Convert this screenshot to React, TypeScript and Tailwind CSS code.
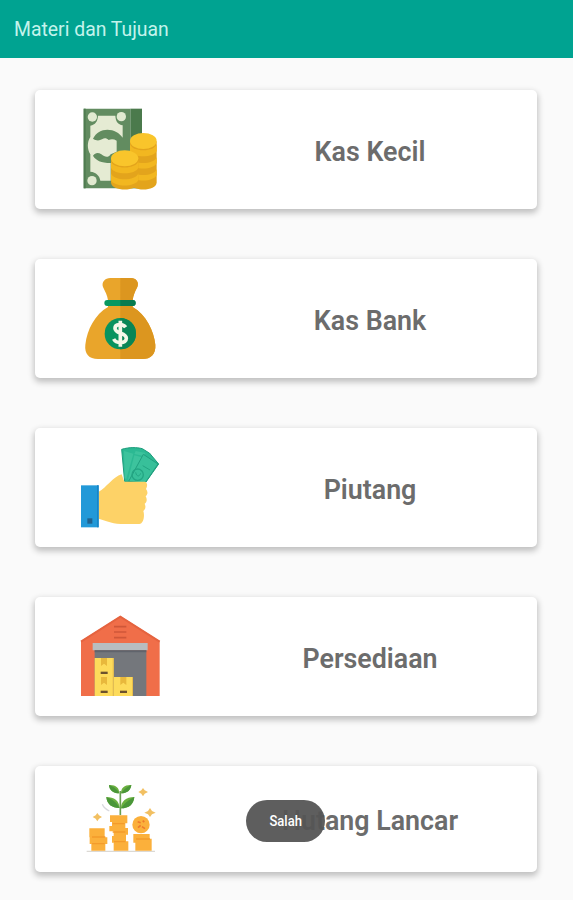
import type { ReactNode } from "react";

function CashIcon() {
  return (
    <svg width="100" height="105" viewBox="0 0 300 315">
      <path fill="#628c60" d="M41 41h140v239H41z" />
      <path fill="#4b7a4c" d="M181 41h35v239h-35z" />
      <path fill="#4f7c50" d="M41 41h6v239h-6z" />
      <path fill="#e5ebd3" d="M84 62h52c1 18 8 26 22 29v37c-10-15-26-24-46-24-18 0-34 9-43 27 8 6 18 7 27 2 8-5 14-3 20 2 7-3 16-3 24 2v33l-18 8c-8 12-18 8-28 0-9-6-18-6-25 4 8 14 24 22 53 22v53H91c-2-15-12-25-30-27v-52c-10-17-10-37 0-52V92c15-3 22-13 23-30z" />
      <circle cx="67" cy="66" r="14" fill="#e1ead0" />
      <circle cx="154" cy="65" r="14" fill="#e1ead0" />
      <circle cx="66" cy="257" r="14" fill="#e1ead0" />
      <path fill="#e3a41c" d="M180 139h80v123c0 29-80 29-80 0z" />
      <path fill="#f2b720" d="M180 146c4 26 76 26 80 0v22c-8 21-72 21-80 0zM180 186c8 24 72 24 80 0v18c-8 22-72 22-80 0zM180 222c8 24 72 24 80 0v18c-8 22-72 22-80 0z" />
      <ellipse cx="220" cy="138" rx="40" ry="24" fill="#f9c52b" />
      <path fill="#e3a41c" d="M123 190h82v72c0 29-82 29-82 0z" />
      <path fill="#f2b720" d="M123 198c4 26 78 26 82 0v20c-8 22-74 22-82 0zM123 235c8 24 74 24 82 0v20c-8 22-74 22-82 0z" />
      <ellipse cx="164" cy="190" rx="41" ry="24" fill="#f9c52b" />
    </svg>
  );
}

function MoneyBagIcon() {
  return (
    <svg width="100" height="105" viewBox="0 -3 300 315">
      <path fill="#e9a52b" d="M121 39h62c15 0 25 13 19 27-8 16-12 24-14 40v20c41 22 64 74 68 113 2 28-14 43-38 43H84c-27 0-41-16-38-43 5-45 29-91 68-113v-20c-2-16-8-25-15-40-5-14 6-27 22-27z" />
      <path fill="#dc961f" d="M151 39h32c15 0 25 13 19 27-8 16-12 24-14 40v20c41 22 64 74 68 113 2 28-14 43-38 43h-67z" />
      <rect x="103" y="105" width="94" height="18" rx="9" fill="#079861" />
      <path fill="#087b50" d="M151 105h37a9 9 0 0 1 0 18h-37z" />
      <circle cx="151" cy="206" r="47" fill="#08935e" />
      <path fill="#088555" d="M151 159a47 47 0 0 1 0 94z" />
      <path d="M151 167v78M167 187c-8-12-32-11-32 3 0 18 34 12 34 30 0 17-30 17-38 2" fill="none" stroke="#f4f7e8" strokeWidth="11" />
    </svg>
  );
}

function HandCashIcon() {
  return (
    <svg width="100" height="105" viewBox="0 -6 300 315">
      <path fill="#2cb993" stroke="#1c9c7b" strokeWidth="3" d="M155 43c24-7 45-6 62-2l22 14 27 32-41 58-61-5z" />
      <path fill="#3dc39d" d="M162 48l28 8-21 76-5-2zM197 48l30 6-9 8-25-5zM193 61l31 8-36 60-14 5z" />
      <path fill="#38c09a" stroke="#219f7f" strokeWidth="3" d="M220 58l44 29-39 57-49-5z" />
      <circle cx="203" cy="119" r="17" fill="none" stroke="#23a583" strokeWidth="4" />
      <path d="M197 112c3 14 11 14 15 3M218 92l22 13" fill="none" stroke="#23a583" strokeWidth="3" />
      <path fill="#fdd267" d="M86 170c23-11 43-45 69-52l8 22h61c9 1 9 14 4 22 6 9 6 15-1 22 5 8 4 17-3 22 4 9 3 16-4 22 5 15 0 39-12 39h-56c-31-2-46-11-66-16z" />
      <path fill="#2299d8" d="M33 151h53v126H33z" />
      <path fill="#1685c7" d="M81 151h5v126h-5z" />
      <path fill="#21628e" d="M52 250h15v16H52z" />
    </svg>
  );
}

function Box({ x, y }: { x: number; y: number }) {
  return (
    <g transform={`translate(${x} ${y})`}>
      <path fill="#fddb5b" d="M0 0h57v57H0z" />
      <path fill="#e8b83c" d="M19 0h18v24l-9-7-9 7z" />
      <path fill="#6c512d" d="M18 41h21v7H18z" />
      <path fill="#e9be4c" d="M54 0h3v57h-3z" />
    </g>
  );
}

function WarehouseIcon() {
  return (
    <svg width="100" height="105" viewBox="0 -9 300 315">
      <path fill="#f06e49" d="M33 108L151 33l118 75v165H33z" />
      <path d="M33 110L151 35l118 75" fill="none" stroke="#e5633f" strokeWidth="6" />
      <path d="M132 65h37M132 81h37M132 98h37" stroke="#cf5739" strokeWidth="5" />
      <path fill="#b8bdc0" d="M68 114h165v22H68z" />
      <path fill="#74777c" d="M74 136h155v137H74z" />
      <path fill="#60646c" d="M74 136h155v6H74z" />
      <Box x={74} y={159} />
      <Box x={74} y={216} />
      <Box x={132} y={216} />
    </svg>
  );
}

function InvestmentIcon() {
  return (
    <svg width="100" height="105" viewBox="0 3 300 315">
      <path d="M50 244h205" stroke="#dcd9d4" strokeWidth="4" />
      <path fill="#fbb03b" d="M58 175h46v27h8v20h-6v20H64v-20h-5v-20h-1zM126 136h46v24h-6v14h8v20h-6v20h7v28h-44v-24h-5v-20h5v-14h-13v-16h8v-12h-6v-20h6zM190 192h49v14h6v36h-49v-24h-6z" />
      <path d="M66 201h40M66 221h38M128 161h36M128 186h38M132 215h34M198 207h42" stroke="#f49b2b" strokeWidth="4" />
      <circle cx="213" cy="164" r="26" fill="#fbb03b" />
      <path d="M203 155l9 3M216 170l9 6M204 173l8-7M218 152l5 4" stroke="#ee7a2b" strokeWidth="5" />
      <path d="M151 135V63" stroke="#689f50" strokeWidth="5" />
      <path fill="#6bb03f" d="M148 70c-19 0-30-10-31-25 20-1 31 8 31 25zM153 70c0-17 11-26 31-25-2 16-13 25-31 25zM149 114c-24 0-38-12-40-33 23 0 39 11 40 33zM153 115c0-21 15-34 40-34-2 22-16 34-40 34z" />
      <path fill="#4a9639" d="M117 45c15 6 23 11 31 25-19 0-30-10-31-25zM184 45c-15 7-22 13-31 25 18 0 29-9 31-25zM109 81c19 8 30 15 40 33-24 0-38-12-40-33zM193 81c-17 9-26 15-40 34 24 0 38-12 40-34z" />
      <path fill="#f2c062" d="M219 54l5 7 10 5-10 5-5 8-5-8-9-5 9-5zM240 114l6 9 11 5-11 5-6 8-6-8-11-5 11-5zM82 129l5 7 9 5-9 5-5 8-5-8-9-5 9-5z" />
      <path d="M97 103c4 10 10 15 21 20" fill="none" stroke="#d7d7dd" strokeWidth="4" />
    </svg>
  );
}

const menu: { title: string; icon: ReactNode; height: string }[] = [
  { title: "Kas Kecil", icon: <CashIcon />, height: "h-[119px]" },
  { title: "Kas Bank", icon: <MoneyBagIcon />, height: "h-[119px]" },
  { title: "Piutang", icon: <HandCashIcon />, height: "h-[119px]" },
  { title: "Persediaan", icon: <WarehouseIcon />, height: "h-[119px]" },
  { title: "Hutang Lancar", icon: <InvestmentIcon />, height: "h-[106px]" },
];

export default function App() {
  return (
    <div className="relative h-[900px] w-[573px] overflow-hidden bg-[#fafafa] font-[Roboto,sans-serif]">
      <header className="flex h-[58px] items-center bg-[#00a391] pt-[2px] pl-[14px] text-[19.4px] text-[#c4f3ec]">
        <h1>Materi dan Tujuan</h1>
      </header>
      <main className="flex flex-col gap-[50px] pt-8 pr-9 pl-[35px]">
        {menu.map(item => (
          <section key={item.title} className={`flex shrink-0 rounded-[5px] bg-white shadow-[0_3px_6px_1px_rgba(0,0,0,0.24)] ${item.height}`}>
            <div className="flex w-[170px] shrink-0 justify-center pt-[5px]">{item.icon}</div>
            <div className="flex flex-1 items-center justify-center pt-[5px] pr-[2px] text-[26.8px] font-semibold text-[#6c6c6c]">
              {item.title}
            </div>
          </section>
        ))}
      </main>
      {/* Toast */}
      <div className="absolute top-[800px] left-[246px] flex h-[42px] w-[79px] items-center justify-center rounded-full bg-[#555555]/95 text-[15px] font-medium text-white">
        <span className="scale-x-[0.87]">Salah</span>
      </div>
    </div>
  );
}
